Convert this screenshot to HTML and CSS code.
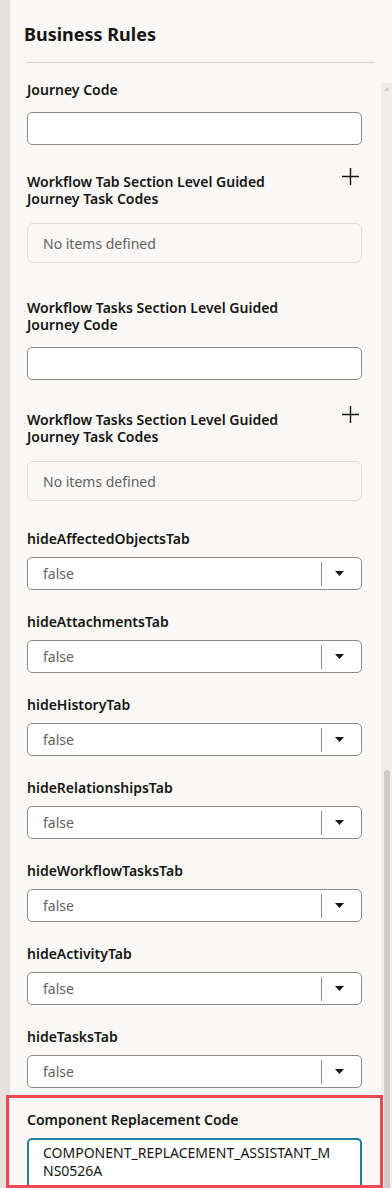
FILE: index.html
```html
<!DOCTYPE html>
<html lang="en">
<head>
<meta charset="utf-8">
<title>Business Rules</title>
<link rel="stylesheet" href="styles.css">
</head>
<body>
<div class="shell">
  <div class="strip"></div>
  <section class="panel">
    <header class="panel-header">
      <h2 class="panel-title">Business Rules</h2>
      <div class="divider"></div>
    </header>
    <div class="panel-body">
      <div class="form">
        <div class="field field--text">
          <div class="label">Journey Code</div>
          <div class="input"></div>
        </div>

        <div class="field field--list">
          <div class="list-head">
            <div class="label label--head">Workflow Tab Section Level Guided Journey Task Codes</div>
            <svg class="plus" width="17" height="17" viewBox="0 0 17 17"><path d="M8.5 0V17M0 8.5H17" stroke="#161513" stroke-width="1.4" fill="none"/></svg>
          </div>
          <div class="empty">No items defined</div>
        </div>

        <div class="field field--text field--after-list">
          <div class="label label--wrap">Workflow Tasks Section Level Guided Journey Code</div>
          <div class="input"></div>
        </div>

        <div class="field field--list field--list2">
          <div class="list-head">
            <div class="label label--head">Workflow Tasks Section Level Guided Journey Task Codes</div>
            <svg class="plus" width="17" height="17" viewBox="0 0 17 17"><path d="M8.5 0V17M0 8.5H17" stroke="#161513" stroke-width="1.4" fill="none"/></svg>
          </div>
          <div class="empty">No items defined</div>
        </div>

        <div class="field field--select">
          <div class="label">hideAffectedObjectsTab</div>
          <div class="select"><span class="select-value">false</span><span class="select-btn"><svg width="9" height="5" viewBox="0 0 9 5"><path d="M0 0H9L4.5 5Z" fill="#161513"/></svg></span></div>
        </div>

        <div class="field field--select">
          <div class="label">hideAttachmentsTab</div>
          <div class="select"><span class="select-value">false</span><span class="select-btn"><svg width="9" height="5" viewBox="0 0 9 5"><path d="M0 0H9L4.5 5Z" fill="#161513"/></svg></span></div>
        </div>

        <div class="field field--select">
          <div class="label">hideHistoryTab</div>
          <div class="select"><span class="select-value">false</span><span class="select-btn"><svg width="9" height="5" viewBox="0 0 9 5"><path d="M0 0H9L4.5 5Z" fill="#161513"/></svg></span></div>
        </div>

        <div class="field field--select">
          <div class="label">hideRelationshipsTab</div>
          <div class="select"><span class="select-value">false</span><span class="select-btn"><svg width="9" height="5" viewBox="0 0 9 5"><path d="M0 0H9L4.5 5Z" fill="#161513"/></svg></span></div>
        </div>

        <div class="field field--select">
          <div class="label">hideWorkflowTasksTab</div>
          <div class="select"><span class="select-value">false</span><span class="select-btn"><svg width="9" height="5" viewBox="0 0 9 5"><path d="M0 0H9L4.5 5Z" fill="#161513"/></svg></span></div>
        </div>

        <div class="field field--select">
          <div class="label">hideActivityTab</div>
          <div class="select"><span class="select-value">false</span><span class="select-btn"><svg width="9" height="5" viewBox="0 0 9 5"><path d="M0 0H9L4.5 5Z" fill="#161513"/></svg></span></div>
        </div>

        <div class="field field--select">
          <div class="label">hideTasksTab</div>
          <div class="select"><span class="select-value">false</span><span class="select-btn"><svg width="9" height="5" viewBox="0 0 9 5"><path d="M0 0H9L4.5 5Z" fill="#161513"/></svg></span></div>
        </div>

        <div class="field field--select field--highlight">
          <div class="label">Component Replacement Code</div>
          <div class="textarea">COMPONENT_REPLACEMENT_ASSISTANT_M<br>NS0526A</div>
        </div>
      </div>
      <div class="scrollbar">
        <span class="scroll-arrow"></span>
        <span class="scroll-thumb"></span>
      </div>
    </div>
  </section>
</div>
</body>
</html>
```

FILE: styles.css
```css
html, body {
  margin: 0;
  padding: 0;
}
body {
  width: 392px;
  height: 1188px;
  overflow: hidden;
  background: #e4e1dd;
  font-family: "Noto Sans", "Open Sans", sans-serif;
  color: #161513;
}
.shell {
  display: flex;
  height: 1188px;
}
.strip {
  width: 10px;
  flex: none;
  background: #e4e1dd;
}
.panel {
  flex: 1;
  background: #f9f8f6;
  display: flex;
  flex-direction: column;
}
.panel-header {
  padding: 22px 0 0 14px;
}
.panel-title {
  margin: 0;
  font-size: 18px;
  line-height: 24px;
  font-weight: 700;
}
.divider {
  height: 1px;
  background: #d6d3cf;
  margin: 16px 17px 0 3px;
}
.panel-body {
  display: flex;
  align-items: flex-start;
}
.form {
  width: 335px;
  margin-left: 17px;
  padding-top: 18px;
}
.label {
  font-size: 14px;
  line-height: 17px;
  font-weight: 600;
}
.field {
  position: relative;
  margin-bottom: 23px;
}
.field--text .label {
  margin-bottom: 14px;
}
.input {
  height: 31px;
  background: #fff;
  border: 1px solid #8f8b87;
  border-radius: 5px;
}
.list-head {
  display: flex;
  justify-content: space-between;
  align-items: flex-start;
}
.label--head {
  max-width: 285px;
  margin-top: 5px;
}
.label--wrap {
  max-width: 285px;
  margin-top: 2px;
}
.plus {
  flex: none;
  margin-right: 3px;
}
.empty {
  margin-top: 16px;
  height: 38px;
  border: 1px solid #e0ddd9;
  border-radius: 6px;
  background: #f9f8f6;
  padding-left: 15px;
  display: flex;
  align-items: center;
  font-size: 14px;
  color: #65625f;
}
.field--list {
  margin-bottom: 36px;
}
.field--after-list {
  margin-bottom: 26px;
}
.field--list2 {
  margin-bottom: 29px;
}
.field--select .label {
  margin-bottom: 10px;
}
.select {
  height: 31px;
  background: #fff;
  border: 1px solid #8f8b87;
  border-radius: 5px;
  display: flex;
  align-items: center;
}
.select-value {
  flex: 1;
  padding-left: 15px;
  font-size: 14px;
  color: #65625f;
}
.select-btn {
  width: 34px;
  height: 24px;
  padding-right: 5px;
  border-left: 1px solid #8f8b87;
  display: flex;
  align-items: center;
  justify-content: center;
}
.field--highlight {
  margin-bottom: 0;
}
.textarea {
  height: 42px;
  background: #fff;
  border: 2px solid #227e9e;
  border-bottom: 0;
  border-radius: 5px 5px 0 0;
  padding: 4px 10px 0 14px;
  font-size: 14px;
  line-height: 18px;
  color: #161513;
}
.field--highlight::before {
  content: "";
  position: absolute;
  top: -16px;
  left: -21px;
  right: -21px;
  height: 87px;
  border: 3px solid #ef4850;
  pointer-events: none;
  z-index: 2;
}
.scrollbar {
  margin-left: auto;
  margin-top: 20px;
  width: 11px;
  height: 1105px;
  background: #efeeec;
  display: flex;
  flex-direction: column;
  align-items: center;
}
.scroll-arrow {
  margin-top: 4px;
  width: 0;
  height: 0;
  border-left: 3px solid transparent;
  border-right: 3px solid transparent;
  border-bottom: 4px solid #cdcbc8;
}
.scroll-thumb {
  margin-top: 679px;
  width: 6px;
  height: 418px;
  border-radius: 3px 3px 0 0;
  background: #cfcdca;
}
```
